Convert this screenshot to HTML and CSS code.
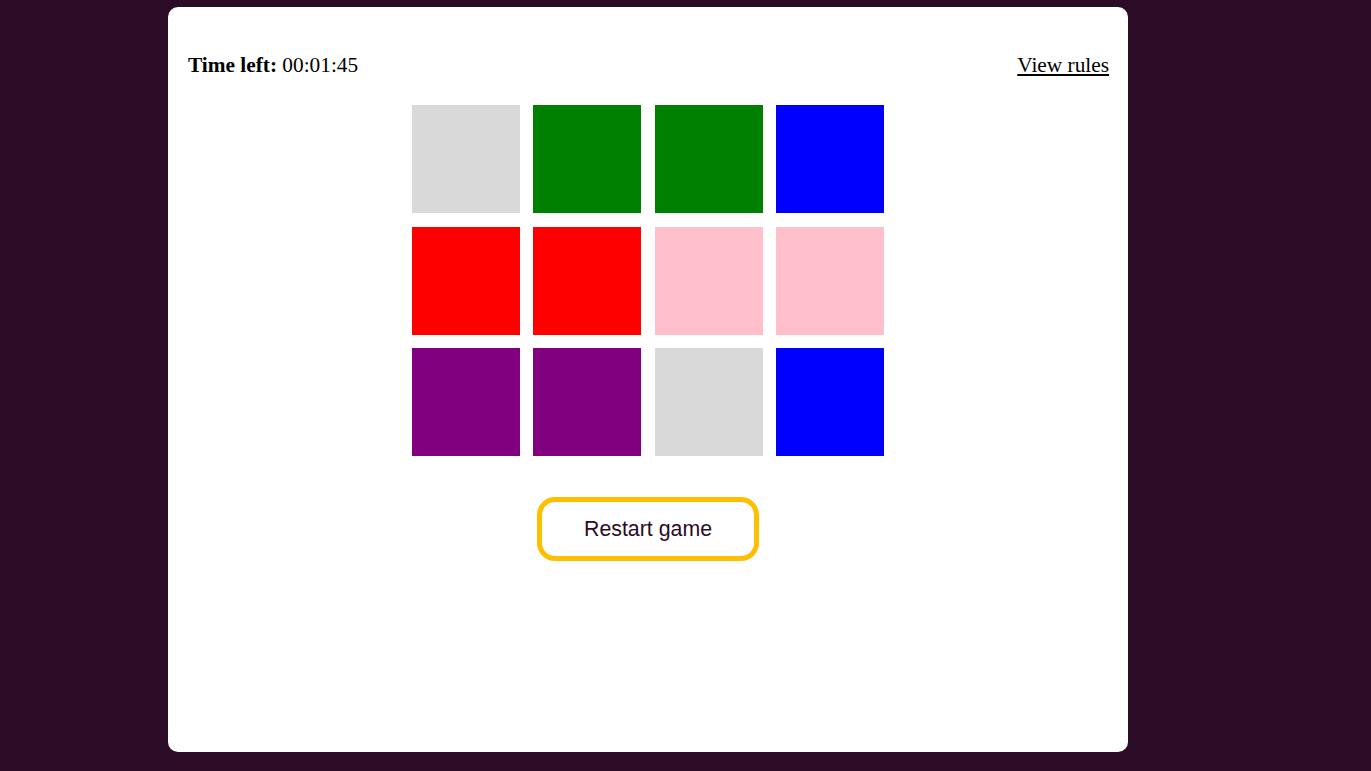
FILE: index.html
```html
<!DOCTYPE html>
<html>
<head>
<meta charset="utf-8">
<link rel="stylesheet" href="styles.css">
</head>
<body>
<div class="card">
  <div class="header">
    <div class="timer"><b>Time left:</b> 00:01:45</div>
    <a class="rules" href="#">View rules</a>
  </div>
  <div class="grid">
    <div class="tile gray"></div>
    <div class="tile green"></div>
    <div class="tile green"></div>
    <div class="tile blue"></div>
    <div class="tile red"></div>
    <div class="tile red"></div>
    <div class="tile pink"></div>
    <div class="tile pink"></div>
    <div class="tile purple"></div>
    <div class="tile purple"></div>
    <div class="tile gray"></div>
    <div class="tile blue"></div>
  </div>
  <div class="actions">
    <button class="restart">Restart game</button>
  </div>
</div>
</body>
</html>
```
FILE: styles.css
```css
html, body {
  margin: 0;
  padding: 0;
  background: #2b0b25;
  height: 100%;
}
body {
  font-family: "Liberation Serif", "Times New Roman", serif;
}
.card {
  box-sizing: border-box;
  width: 960px;
  height: 745px;
  margin: 7px 0 0 168px;
  background: #ffffff;
  border-radius: 10px;
  padding: 20px;
}
.header {
  display: flex;
  justify-content: space-between;
  align-items: center;
  margin-top: 26px;
  font-size: 21.33px;
  line-height: 25px;
  color: #000;
}
.rules {
  color: #000;
  text-decoration: underline;
  margin-right: -1px;
}
.grid {
  display: grid;
  grid-template-columns: repeat(4, 108px);
  grid-auto-rows: 108px;
  column-gap: 13.33px;
  row-gap: 13.5px;
  justify-content: center;
  margin-top: 27px;
}
.gray { background: #d9d9d9; }
.green { background: #008000; }
.blue { background: #0000ff; }
.red { background: #ff0000; }
.pink { background: #ffc0cb; }
.purple { background: #800080; }
.actions {
  display: flex;
  justify-content: center;
  margin-top: 41px;
}
.restart {
  box-sizing: border-box;
  width: 222px;
  height: 64px;
  border: 5px solid #ffbf00;
  border-radius: 18px;
  background: #fff;
  font-family: "Liberation Sans", Arial, sans-serif;
  font-size: 21.33px;
  color: #2b0b25;
  padding: 0;
  cursor: pointer;
}
```
